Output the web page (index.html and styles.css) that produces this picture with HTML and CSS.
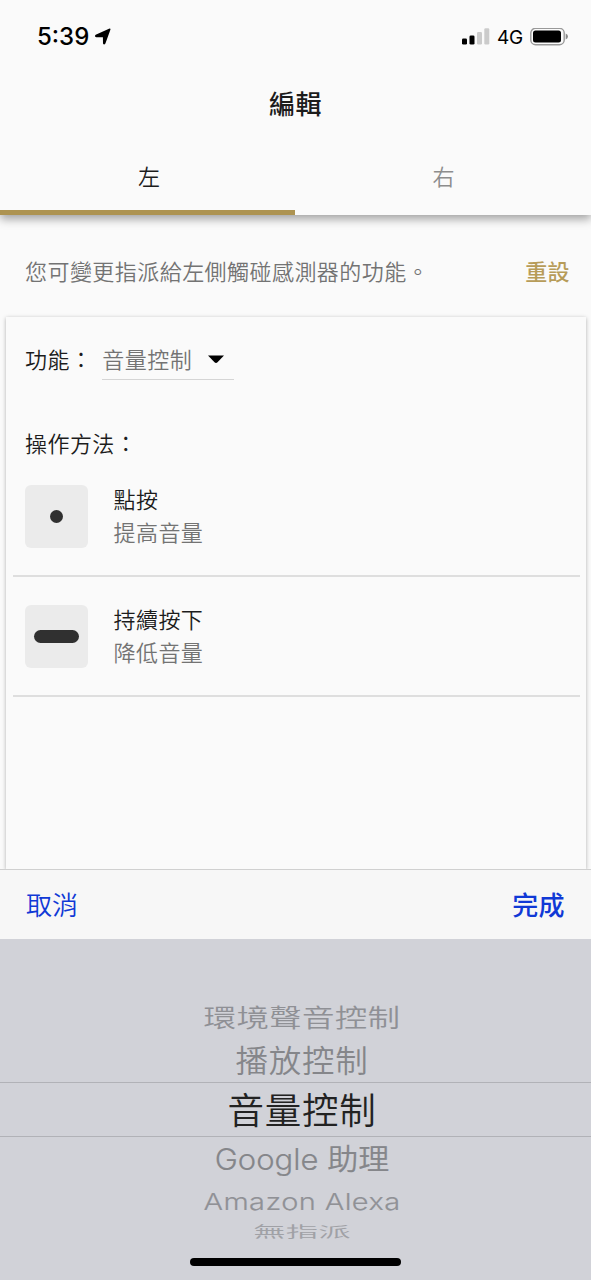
FILE: index.html
```html
<!DOCTYPE html>
<html lang="zh-Hant">
<head>
<meta charset="utf-8">
<title>編輯</title>
<link rel="stylesheet" href="styles.css">
</head>
<body>
<div class="screen">
  <header class="header">
    <div class="status">
      <span class="time">5:39</span>
      <svg class="location" width="18" height="18" viewBox="0 0 18 18"><path d="M15 .8 Q17 .1 16.300 2 L11.400 15.400 Q10 17.400 9 15.400 L8.900 9.300 L2.300 9.200 Q-.1 8.300 1.700 6.700 Z"/></svg>
      <svg class="signal" width="28" height="18" viewBox="0 0 28 18"><rect x="0" y="10.500" width="5" height="6" rx="1.300"/><rect x="7.500" y="7.500" width="5" height="9" rx="1.300"/><g fill="#cbcbcb"><rect x="15" y="4" width="5" height="12.500" rx="1.300"/><rect x="22.300" y=".2" width="5" height="16.300" rx="1.300"/></g></svg>
      <span class="network">4G</span>
      <svg class="battery" width="38" height="18" viewBox="0 0 38 18"><rect x=".8" y=".3" width="33.400" height="16.400" rx="4.800" fill="none" stroke="#999" stroke-width="1.400"/><rect x="3" y="2.500" width="28" height="12" rx="2.500"/><path d="M35.700 5.500 Q38 6.500 38 8.500 T35.700 11.500Z" fill="#888"/></svg>
    </div>
    <h1 class="title">編輯</h1>
    <nav class="tabs">
      <div class="tab tab-active">左</div>
      <div class="tab">右</div>
    </nav>
  </header>
  <section class="intro"><p class="text muted">您可變更指派給左側觸碰感測器的功能。</p><a class="reset">重設</a></section>
  <main class="card">
    <div class="function">
      <span class="text">功能：</span>
      <div class="select text"><span>音量控制</span><svg width="16" height="9" viewBox="0 0 16 9"><path d="M0 .5H16L9.500 7.300Q8 8.700 6.500 7.300Z"/></svg></div>
    </div>
    <div class="method text">操作方法：</div>
    <div class="action"><div class="gesture"><i class="dot"></i></div><div class="text"><div>點按</div><div class="muted">提高音量</div></div></div>
    <div class="action"><div class="gesture"><i class="bar"></i></div><div class="text"><div>持續按下</div><div class="muted">降低音量</div></div></div>
  </main>
  <div class="toolbar"><a>取消</a><a class="done">完成</a></div>
  <div class="picker">
    <div class="option far"><span>環境聲音控制</span></div>
    <div class="option near"><span>播放控制</span></div>
    <div class="option selected"><span>音量控制</span></div>
    <div class="option near google"><span>Google 助理</span></div>
    <div class="option alexa"><span>Amazon Alexa</span></div>
    <div class="option last"><span>無指派</span></div>
    <div class="home"></div>
  </div>
</div>
</body>
</html>
```
FILE: styles.css
```css
* { box-sizing: border-box; }
body { margin: 0; background: #fafafa; color: #1c1c1c; font-family: "Noto Sans CJK TC", sans-serif; }
.screen { width: 591px; height: 1280px; overflow: hidden; display: flex; flex-direction: column; }
.header { height: 215px; flex: none; position: relative; background: #fafafa; box-shadow: 0 4px 9px rgba(0,0,0,.36); display: flex; flex-direction: column; }
.status { height: 72px; display: flex; align-items: center; padding: 1px 23px 0 37px; color: #000; font-family: Inter, sans-serif; }
.time { width: 57px; font-size: 24px; font-weight: 550; letter-spacing: 0; white-space: nowrap; }
.signal { margin-left: auto; }
.network { width: 26px; margin: 0 7px; padding-top: 1px; font-size: 19px; letter-spacing: -.3px; white-space: nowrap; }
.title { margin: 0; height: 62px; line-height: 62px; font-size: 26px; font-weight: 500; letter-spacing: .4px; text-align: center; }
.tabs { flex: 1; display: grid; grid-template-columns: 295px 296px; }
.tab { height: 81px; padding-left: 1px; line-height: 83px; font-size: 22px; font-weight: 350; text-align: center; color: #8d8d8d; }
.tab-active { padding-left: 3px; color: #1c1c1c; border-bottom: 5px solid #ad9351; }
.text { margin: 0; font-size: 22px; font-weight: 350; letter-spacing: .45px; line-height: 32.500px; }
.muted { color: #737373; }
.intro { height: 102px; flex: none; display: flex; justify-content: space-between; align-items: center; padding: 8px 21px 0 25px; }
.reset { font-size: 22px; font-weight: 500; letter-spacing: .4px; color: #b79c59; }
.card { flex: 1; margin: 0 5px 0 6px; padding: 20px 6px 0 7px; background: #fafafa; box-shadow: 0 1px 4px rgba(0,0,0,.3); }
.function { height: 43px; display: flex; padding-left: 12px; }
.function > .text { padding-top: 5px; }
.function .select { width: 132px; margin-left: 10px; padding: 5px 0 5px; border-bottom: 1.500px solid #d5d5d5; display: flex; align-items: center; gap: 16px; color: #737373; }
.select span { white-space: nowrap; }
.select svg { position: relative; top: 1px; fill: #000; }
.method { height: 76px; padding: 46px 0 0 12px; }
.action { height: 120px; border-bottom: 2px solid #dedede; display: flex; align-items: center; gap: 25.500px; padding-left: 12px; }
.action .text { margin-top: -3px; }
.method + .action { margin-top: 1px; }
.gesture { width: 63px; height: 63px; border-radius: 6px; background: #ebebeb; display: grid; place-items: center; }
.dot, .bar { width: 13px; height: 13px; border-radius: 7px; background: #303030; }
.bar { width: 45px; }
.toolbar { height: 70px; flex: none; position: relative; display: flex; justify-content: space-between; align-items: center; padding: 0 26px 2px; background: #f7f7f7; border-top: 1px solid #d0d0d0; color: #1039d6; font-size: 26px; font-weight: 350; }
.done { font-weight: 500; letter-spacing: .4px; }
.picker { height: 341px; flex: none; position: relative; background: #d1d2d8; padding-top: 56px; }
.option { display: flex; align-items: center; justify-content: center; padding-left: 13px; font-size: 32.500px; font-weight: 350; letter-spacing: .8px; white-space: nowrap; color: #85868a; line-height: 1; }
.far { height: 42px; letter-spacing: .3px; color: #8f9095; } .far span { transform: scaleY(.76); }
.near { height: 44px; } .near span { transform: scaleY(.94); }
.selected { height: 55px; margin-top: 1px; border: solid #b1b2b7; border-width: 1.500px 0; color: #222; font-size: 36.500px; }
.google { font-family: Inter, "Noto Sans CJK TC", sans-serif; font-size: 31px; letter-spacing: 0; padding-top: 1px; }
.google span { -webkit-text-stroke: .2px; }
.alexa { height: 40px; font-family: Inter, sans-serif; font-size: 29px; letter-spacing: .4px; color: #909196; } .alexa span { transform: scaleY(.8); -webkit-text-stroke: .2px; }
.last { height: 21px; padding-bottom: 2px; letter-spacing: 0; color: #a0a1a6; } .last span { transform: scaleY(.46); }
.home { width: 211px; height: 8px; margin: 16px 0 0 190px; border-radius: 4px; background: #000; }
```
